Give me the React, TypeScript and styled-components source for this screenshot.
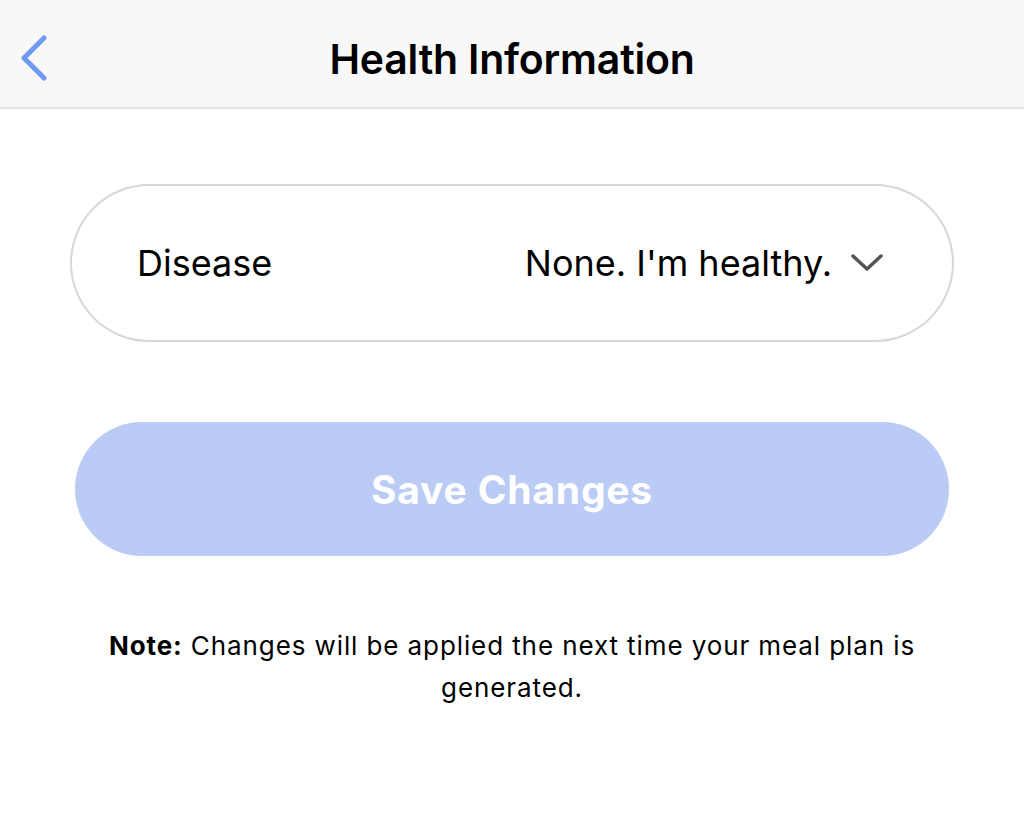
import styled, { createGlobalStyle } from "styled-components";

const GlobalStyle = createGlobalStyle`
  html, body {
    margin: 0;
    padding: 0;
    background: #ffffff;
    font-family: Inter, "Noto Sans", sans-serif;
    color: #000;
  }
`;

const Page = styled.div`
  display: flex;
  flex-direction: column;
  width: 1024px;
  min-height: 839px;
`;

const Header = styled.header`
  position: relative;
  box-sizing: border-box;
  height: 109px;
  padding-top: 10px;
  background: #f8f8f9;
  border-bottom: 2px solid #e4e4e6;
  display: flex;
  align-items: center;
  justify-content: center;
`;

const BackButton = styled.button`
  position: absolute;
  left: 14px;
  top: 30px;
  border: none;
  background: none;
  padding: 0;
  width: 40px;
  height: 56px;
  display: flex;
  align-items: center;
  justify-content: center;
  cursor: pointer;
`;

const Title = styled.h1`
  margin: 0;
  font-size: 41px;
  font-weight: 600;
  letter-spacing: -0.2px;
`;

const Content = styled.main`
  display: flex;
  flex-direction: column;
  align-items: center;
  padding: 75px 70px 0 70px;
`;

const SelectRow = styled.div`
  box-sizing: border-box;
  width: 884px;
  height: 158px;
  border: 2px solid #d8d6d7;
  border-radius: 79px;
  display: flex;
  align-items: center;
  justify-content: space-between;
  padding: 0 68px 0 65px;
`;

const Label = styled.span`
  font-size: 36px;
  font-weight: 400;
`;

const Value = styled.span`
  display: flex;
  align-items: center;
  gap: 18px;
  font-size: 36px;
  font-weight: 400;
`;

const SaveButton = styled.button`
  margin-top: 80px;
  width: 874px;
  height: 134px;
  border: none;
  border-radius: 67px;
  background: #bacbf5;
  color: #ffffff;
  font-family: Inter, "Noto Sans", sans-serif;
  font-size: 39px;
  font-weight: 700;
  letter-spacing: 0.8px;
  cursor: pointer;
`;

const Note = styled.p`
  margin: 69px 0 0 0;
  width: 860px;
  text-align: center;
  font-size: 26px;
  line-height: 42px;
  letter-spacing: 0.9px;
`;

export default function App() {
  return (
    <>
      <GlobalStyle />
      <Page>
        <Header>
          <BackButton aria-label="Back">
            <svg width="32" height="46" viewBox="0 0 32 46" fill="none">
              <path
                d="M26 3 L6 23 L26 43"
                stroke="#7099f0"
                strokeWidth="5"
                strokeLinecap="round"
                strokeLinejoin="round"
              />
            </svg>
          </BackButton>
          <Title>Health Information</Title>
        </Header>
        <Content>
          <SelectRow>
            <Label>Disease</Label>
            <Value>
              None. I'm healthy.
              <svg width="34" height="22" viewBox="0 0 34 22" fill="none">
                <path
                  d="M3 4 L17 17 L31 4"
                  stroke="#545454"
                  strokeWidth="3.5"
                  strokeLinecap="round"
                  strokeLinejoin="round"
                />
              </svg>
            </Value>
          </SelectRow>
          <SaveButton>Save Changes</SaveButton>
          <Note>
            <b>Note:</b> Changes will be applied the next time your meal plan is
            generated.
          </Note>
        </Content>
      </Page>
    </>
  );
}
